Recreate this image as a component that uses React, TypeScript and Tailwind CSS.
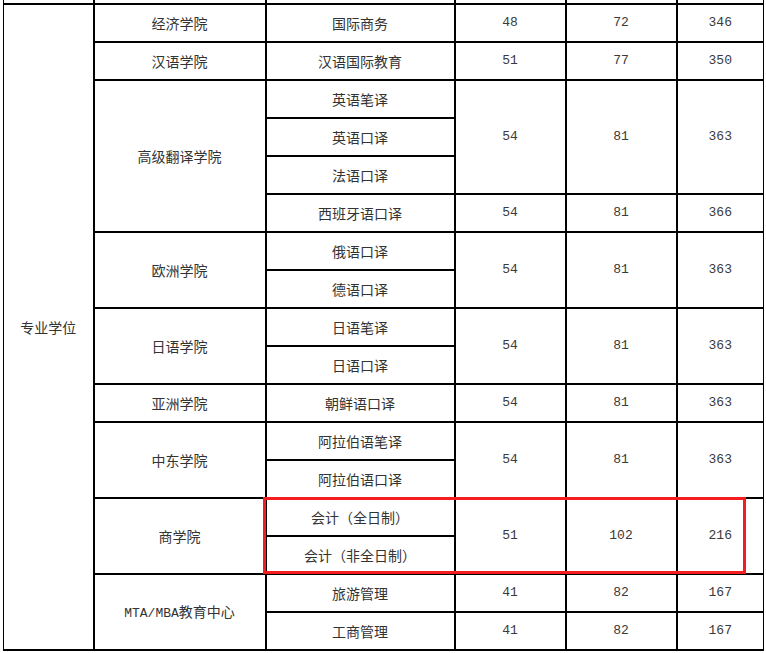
import React from "react";

const cjk = "font-['Noto_Sans_CJK_SC',sans-serif]";
const mono = "font-['Liberation_Mono',monospace]";

const tdBase = "border-2 border-black p-0 text-center align-middle";
const T = ({ children, rs, cls = "" }: { children?: React.ReactNode; rs?: number; cls?: string }) => (
  <td rowSpan={rs} className={`${tdBase} ${cjk} text-[14px] text-[#333] ${cls}`}>{children}</td>
);
const N = ({ children, rs, last = false }: { children?: React.ReactNode; rs?: number; last?: boolean }) => (
  <td rowSpan={rs} className={`${tdBase} ${mono} text-[13px] text-[#3a3a3a] ${last ? "border-r" : ""}`}>{children}</td>
);

export default function App() {
  return (
    <div className="relative h-[653px] w-[766px] overflow-hidden bg-white">
      <table className="-mt-[35px] ml-[3px] w-[760px] table-fixed border-collapse">
        <colgroup>
          <col className="w-[90px]" />
          <col className="w-[172px]" />
          <col className="w-[189px]" />
          <col className="w-[111px]" />
          <col className="w-[111px]" />
          <col className="w-[87px]" />
        </colgroup>
        <tbody>
          <tr className="h-[38px]">
            <td className={`${tdBase} border-l`}></td>
            <T />
            <T />
            <N />
            <N />
            <N last />
          </tr>
          <tr className="h-[38px]">
            <td rowSpan={17} className={`${tdBase} border-l ${cjk} text-[14px] text-[#333]`}>专业学位</td>
            <T>经济学院</T>
            <T>国际商务</T>
            <N>48</N>
            <N>72</N>
            <N last>346</N>
          </tr>
          <tr className="h-[38px]">
            <T>汉语学院</T>
            <T>汉语国际教育</T>
            <N>51</N>
            <N>77</N>
            <N last>350</N>
          </tr>
          <tr className="h-[38px]">
            <T rs={4}>高级翻译学院</T>
            <T>英语笔译</T>
            <N rs={3}>54</N>
            <N rs={3}>81</N>
            <N rs={3} last>363</N>
          </tr>
          <tr className="h-[38px]">
            <T>英语口译</T>
          </tr>
          <tr className="h-[38px]">
            <T>法语口译</T>
          </tr>
          <tr className="h-[38px]">
            <T>西班牙语口译</T>
            <N>54</N>
            <N>81</N>
            <N last>366</N>
          </tr>
          <tr className="h-[38px]">
            <T rs={2}>欧洲学院</T>
            <T>俄语口译</T>
            <N rs={2}>54</N>
            <N rs={2}>81</N>
            <N rs={2} last>363</N>
          </tr>
          <tr className="h-[38px]">
            <T>德语口译</T>
          </tr>
          <tr className="h-[38px]">
            <T rs={2}>日语学院</T>
            <T>日语笔译</T>
            <N rs={2}>54</N>
            <N rs={2}>81</N>
            <N rs={2} last>363</N>
          </tr>
          <tr className="h-[38px]">
            <T>日语口译</T>
          </tr>
          <tr className="h-[38px]">
            <T>亚洲学院</T>
            <T>朝鲜语口译</T>
            <N>54</N>
            <N>81</N>
            <N last>363</N>
          </tr>
          <tr className="h-[38px]">
            <T rs={2}>中东学院</T>
            <T>阿拉伯语笔译</T>
            <N rs={2}>54</N>
            <N rs={2}>81</N>
            <N rs={2} last>363</N>
          </tr>
          <tr className="h-[38px]">
            <T>阿拉伯语口译</T>
          </tr>
          <tr className="h-[38px]">
            <T rs={2}>商学院</T>
            <T>会计（全日制）</T>
            <N rs={2}>51</N>
            <N rs={2}>102</N>
            <N rs={2} last>216</N>
          </tr>
          <tr className="h-[38px]">
            <T>会计（非全日制）</T>
          </tr>
          <tr className="h-[38px]">
            <T rs={2}>
              <span className={`${mono} text-[13px]`}>MTA/MBA</span>教育中心
            </T>
            <T>旅游管理</T>
            <N>41</N>
            <N>82</N>
            <N last>167</N>
          </tr>
          <tr className="h-[38px]">
            <T>工商管理</T>
            <N>41</N>
            <N>82</N>
            <N last>167</N>
          </tr>
        </tbody>
      </table>
      <div className="absolute left-[263px] top-[497px] h-[77px] w-[483px] border-[3px] border-[#f51d1d]"></div>
    </div>
  );
}
